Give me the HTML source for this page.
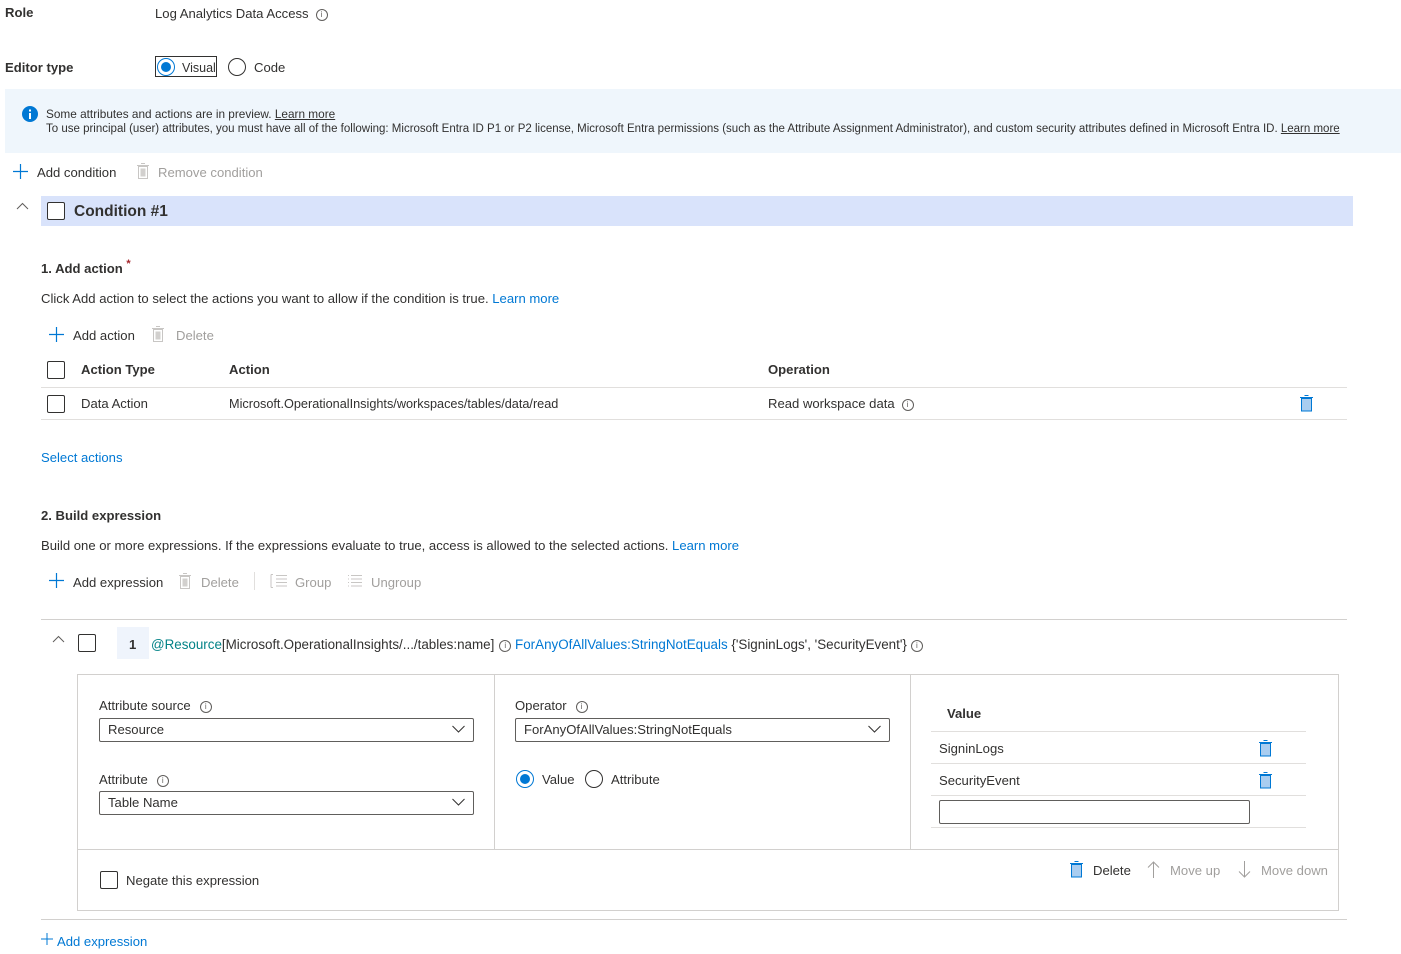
<!DOCTYPE html>
<html><head><meta charset="utf-8"><style>
*{box-sizing:border-box;margin:0;padding:0}
body{width:1401px;height:954px;position:relative;background:#fff;font-family:"Liberation Sans",sans-serif;font-size:13.1px;color:#323130;overflow:hidden}
.a{position:absolute;white-space:nowrap;line-height:16px;margin-top:1px}
.b{font-weight:bold}
.l{color:#0078d4}
.d{color:#a19f9d}
.cb{position:absolute;width:18px;height:18px;border:1px solid #323130;border-radius:2px;background:#fff}
.rd{position:absolute;width:18px;height:18px;border:1px solid #323130;border-radius:50%;background:#fff}
.rd.on{border-color:#0078d4}
.rd.on::after{content:"";position:absolute;left:3px;top:3px;width:10px;height:10px;border-radius:50%;background:#0078d4}
.hl{position:absolute;height:1px;background:#e1dfdd}
.info{display:inline-block;width:12px;height:12px;border:1px solid #605e5c;border-radius:50%;font-size:8px;line-height:10px;text-align:center;vertical-align:1px;color:#605e5c;margin-left:4px}
.sel{position:absolute;height:24px;border:1px solid #605e5c;border-radius:2px;padding-left:8px;line-height:22px}
.sel svg{position:absolute;right:8px;top:6px}
svg{position:absolute}
</style></head><body>
<div class="a b" style="left:5px;top:4px">Role</div>
<div class="a" style="left:155px;top:5px">Log Analytics Data Access<span class="info" style="margin-left:7px">i</span></div>
<div class="a b" style="left:5px;top:59px">Editor type</div>
<div style="position:absolute;left:155px;top:56px;width:62px;height:21px;border:1px solid #323130"></div>
<div class="rd on" style="left:157px;top:58px"></div>
<div class="a" style="left:182px;top:59px;font-size:12.5px">Visual</div>
<div class="rd" style="left:228px;top:58px"></div>
<div class="a" style="left:254px;top:59px">Code</div>

<div style="position:absolute;left:5px;top:89px;width:1396px;height:64px;background:#eff6fc"></div>
<svg style="left:22px;top:106px" width="16" height="16"><circle cx="8" cy="8" r="8" fill="#0078d4"/><rect x="7" y="7" width="2" height="6" fill="#fff"/><rect x="7" y="3.5" width="2" height="2" fill="#fff"/></svg>
<div class="a" style="left:46px;top:105px;font-size:11.8px">Some attributes and actions are in preview. <u>Learn more</u></div>
<div class="a" style="left:46px;top:120px;font-size:11.5px">To use principal (user) attributes, you must have all of the following: Microsoft Entra ID P1 or P2 license, Microsoft Entra permissions (such as the Attribute Assignment Administrator), and custom security attributes defined in Microsoft Entra ID. <u>Learn more</u></div>

<svg style="left:13px;top:164px" width="15" height="15"><path d="M7.5 0V15M0 7.5H15" stroke="#0078d4" stroke-width="1.2"/></svg>
<div class="a" style="left:37px;top:164px">Add condition</div>
<svg style="left:137px;top:163px" width="12" height="16"><rect x="1.5" y="3.5" width="9" height="12" fill="none" stroke="#c8c6c4"/><rect x="3.5" y="5.5" width="5" height="8" fill="#d2d0ce"/><path d="M0 2.5H12M4 0.5H8" stroke="#c8c6c4"/></svg>
<div class="a d" style="left:158px;top:164px">Remove condition</div>

<svg style="left:16px;top:202px" width="13" height="8"><path d="M1 7L6.5 1.5L12 7" fill="none" stroke="#605e5c"/></svg>
<div style="position:absolute;left:41px;top:196px;width:1312px;height:30px;background:#d9e3fb"></div>
<div class="cb" style="left:47px;top:202px"></div>
<div class="a b" style="left:74px;top:202px;font-size:15.5px;line-height:18px">Condition #1</div>

<div class="a b" style="left:41px;top:260px">1. Add action <span style="color:#a4262c;position:relative;top:-6px;font-size:11px">*</span></div>
<div class="a" style="left:41px;top:290px">Click Add action to select the actions you want to allow if the condition is true. <span class="l">Learn more</span></div>
<svg style="left:49px;top:327px" width="15" height="15"><path d="M7.5 0V15M0 7.5H15" stroke="#0078d4" stroke-width="1.2"/></svg>
<div class="a" style="left:73px;top:327px">Add action</div>
<svg style="left:152px;top:326px" width="12" height="16"><rect x="1.5" y="3.5" width="9" height="12" fill="none" stroke="#c8c6c4"/><rect x="3.5" y="5.5" width="5" height="8" fill="#d2d0ce"/><path d="M0 2.5H12M4 0.5H8" stroke="#c8c6c4"/></svg>
<div class="a d" style="left:176px;top:327px">Delete</div>
<div class="cb" style="left:47px;top:361px"></div>
<div class="a b" style="left:81px;top:361px">Action Type</div>
<div class="a b" style="left:229px;top:361px">Action</div>
<div class="a b" style="left:768px;top:361px">Operation</div>
<div class="hl" style="left:41px;top:387px;width:1306px"></div>
<div class="cb" style="left:47px;top:395px"></div>
<div class="a" style="left:81px;top:395px">Data Action</div>
<div class="a" style="left:229px;top:395px;font-size:12.7px">Microsoft.OperationalInsights/workspaces/tables/data/read</div>
<div class="a" style="left:768px;top:395px">Read workspace data<span class="info" style="margin-left:7px">i</span></div>
<svg style="left:1300px;top:395px" width="13" height="17"><rect x="1.5" y="3.5" width="10" height="12.5" fill="#a9cdf0" stroke="#0078d4"/><path d="M0 2.5H13M4.5 0.5H8.5" stroke="#0078d4"/></svg>
<div class="hl" style="left:41px;top:419px;width:1306px"></div>
<div class="a l" style="left:41px;top:449px">Select actions</div>

<div class="a b" style="left:41px;top:507px">2. Build expression</div>
<div class="a" style="left:41px;top:537px">Build one or more expressions. If the expressions evaluate to true, access is allowed to the selected actions. <span class="l">Learn more</span></div>
<svg style="left:49px;top:573px" width="15" height="15"><path d="M7.5 0V15M0 7.5H15" stroke="#0078d4" stroke-width="1.2"/></svg>
<div class="a" style="left:73px;top:574px">Add expression</div>
<svg style="left:179px;top:573px" width="12" height="16"><rect x="1.5" y="3.5" width="9" height="12" fill="none" stroke="#c8c6c4"/><rect x="3.5" y="5.5" width="5" height="8" fill="#d2d0ce"/><path d="M0 2.5H12M4 0.5H8" stroke="#c8c6c4"/></svg>
<div class="a d" style="left:201px;top:574px">Delete</div>
<div style="position:absolute;left:254px;top:572px;width:1px;height:18px;background:#e1dfdd"></div>
<svg style="left:270px;top:574px" width="18" height="14"><path d="M1 0.5V13.5M1 0.5H3M1 13.5H3M6 1.5H17M6 5H17M6 8.5H17M6 12H17" stroke="#c8c6c4"/></svg>
<div class="a d" style="left:295px;top:574px">Group</div>
<svg style="left:347px;top:574px" width="16" height="14"><path d="M1 1.5H2M1 5H2M1 8.5H2M1 12H2M4 1.5H15M4 5H15M4 8.5H15M4 12H15" stroke="#c8c6c4"/></svg>
<div class="a d" style="left:371px;top:574px">Ungroup</div>
<div class="hl" style="left:41px;top:619px;width:1306px;background:#d2d0ce"></div>

<svg style="left:52px;top:635px" width="13" height="8"><path d="M1 7L6.5 1.5L12 7" fill="none" stroke="#605e5c"/></svg>
<div class="cb" style="left:78px;top:634px"></div>
<div style="position:absolute;left:117px;top:627px;width:32px;height:32px;background:#eff4fc"></div>
<div class="a b" style="left:129px;top:636px">1</div>
<div class="a" style="left:151px;top:636px;font-size:13.4px"><span style="color:#038387">@Resource</span>[Microsoft.OperationalInsights/.../tables:name]<span class="info" style="margin-left:5px">i</span> <span class="l">ForAnyOfAllValues:StringNotEquals</span> {'SigninLogs', 'SecurityEvent'}<span class="info">i</span></div>

<div style="position:absolute;left:77px;top:674px;width:1262px;height:237px;border:1px solid #d2d0ce"></div>
<div style="position:absolute;left:494px;top:675px;width:1px;height:174px;background:#d2d0ce"></div>
<div style="position:absolute;left:910px;top:675px;width:1px;height:174px;background:#d2d0ce"></div>
<div class="hl" style="left:78px;top:849px;width:1260px;background:#d2d0ce"></div>

<div class="a" style="left:99px;top:697px">Attribute source<span class="info" style="margin-left:9px">i</span></div>
<div class="sel" style="left:99px;top:718px;width:375px">Resource<svg width="13" height="8"><path d="M0.5 1L6.5 7L12.5 1" fill="none" stroke="#323130"/></svg></div>
<div class="a" style="left:99px;top:771px">Attribute<span class="info" style="margin-left:9px">i</span></div>
<div class="sel" style="left:99px;top:791px;width:375px">Table Name<svg width="13" height="8"><path d="M0.5 1L6.5 7L12.5 1" fill="none" stroke="#323130"/></svg></div>

<div class="a" style="left:515px;top:697px">Operator<span class="info" style="margin-left:9px">i</span></div>
<div class="sel" style="left:515px;top:718px;width:375px">ForAnyOfAllValues:StringNotEquals<svg width="13" height="8"><path d="M0.5 1L6.5 7L12.5 1" fill="none" stroke="#323130"/></svg></div>
<div class="rd on" style="left:516px;top:770px"></div>
<div class="a" style="left:542px;top:771px">Value</div>
<div class="rd" style="left:585px;top:770px"></div>
<div class="a" style="left:611px;top:771px">Attribute</div>

<div class="a b" style="left:947px;top:705px">Value</div>
<div class="hl" style="left:931px;top:731px;width:375px"></div>
<div class="a" style="left:939px;top:740px">SigninLogs</div>
<svg style="left:1259px;top:740px" width="13" height="17"><rect x="1.5" y="3.5" width="10" height="12.5" fill="#a9cdf0" stroke="#0078d4"/><path d="M0 2.5H13M4.5 0.5H8.5" stroke="#0078d4"/></svg>
<div class="hl" style="left:931px;top:763px;width:375px"></div>
<div class="a" style="left:939px;top:772px">SecurityEvent</div>
<svg style="left:1259px;top:772px" width="13" height="17"><rect x="1.5" y="3.5" width="10" height="12.5" fill="#a9cdf0" stroke="#0078d4"/><path d="M0 2.5H13M4.5 0.5H8.5" stroke="#0078d4"/></svg>
<div class="hl" style="left:931px;top:795px;width:375px"></div>
<div style="position:absolute;left:939px;top:800px;width:311px;height:24px;border:1px solid #605e5c;border-radius:2px"></div>
<div class="hl" style="left:931px;top:827px;width:375px"></div>

<div class="cb" style="left:100px;top:871px"></div>
<div class="a" style="left:126px;top:872px">Negate this expression</div>
<svg style="left:1070px;top:861px" width="13" height="17"><rect x="1.5" y="3.5" width="10" height="12.5" fill="#a9cdf0" stroke="#0078d4"/><path d="M0 2.5H13M4.5 0.5H8.5" stroke="#0078d4"/></svg>
<div class="a" style="left:1093px;top:862px">Delete</div>
<svg style="left:1147px;top:861px" width="13" height="17"><path d="M6.5 1V17M1 6.5L6.5 1L12 6.5" fill="none" stroke="#a19f9d"/></svg>
<div class="a d" style="left:1170px;top:862px">Move up</div>
<svg style="left:1238px;top:861px" width="13" height="17"><path d="M6.5 0V16M1 10.5L6.5 16L12 10.5" fill="none" stroke="#a19f9d"/></svg>
<div class="a d" style="left:1261px;top:862px">Move down</div>

<div class="hl" style="left:41px;top:919px;width:1306px;background:#d2d0ce"></div>
<svg style="left:41px;top:933px" width="12" height="12"><path d="M6 0V12M0 6H12" stroke="#0078d4"/></svg>
<div class="a l" style="left:57px;top:933px">Add expression</div>
</body></html>
